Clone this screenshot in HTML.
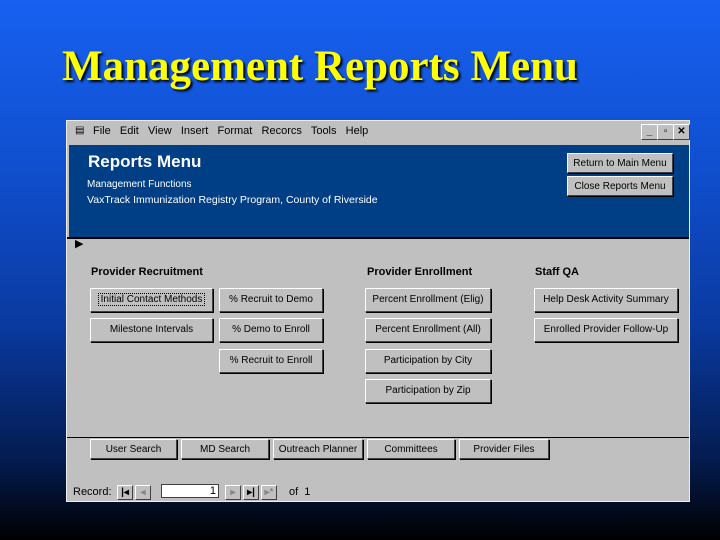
<!DOCTYPE html><html><head><style>
body{margin:0;width:720px;height:540px;overflow:hidden;background:linear-gradient(#1760f0 0%,#1050d0 30%,#0a3aa0 60%,#041c50 85%,#000 100%);font-family:"Liberation Sans",sans-serif;position:relative}
.t{position:absolute;left:62px;top:42px;font:bold 43px "Liberation Serif",serif;color:#ff0;text-shadow:2px 2px 2px #000;white-space:nowrap}
.w{position:absolute;left:66px;top:120px;width:624px;height:382px;background:#c0c0c0;border:1px solid #eee;box-sizing:border-box}
.m{position:absolute;top:4px;font-size:11px;color:#000}
.hd{position:absolute;left:2px;top:24px;width:620px;height:92px;background:#003f86;color:#fff}
.b{position:absolute;height:22px;background:#c0c0c0;border:1px solid;border-color:#fff #404040 #404040 #fff;box-shadow:1px 1px 0 #000;font-size:10px;text-align:center;line-height:22px;box-sizing:border-box;color:#000;white-space:nowrap}
.l{position:absolute;font-size:11px;font-weight:bold;color:#000}
.x{position:absolute;top:3px;width:15px;height:14px;background:#c0c0c0;border:1px solid;border-color:#fff #404040 #404040 #fff;font-size:10px;line-height:13px;text-align:center;font-weight:bold}
</style></head><body>
<div class="t">Management Reports Menu</div>
<div class="w">
<div class="m" style="left:8px;font-size:10px">▤</div>
<div class="m" style="left:26px">File &nbsp; Edit &nbsp; View &nbsp; Insert &nbsp; Format &nbsp; Recorcs &nbsp; Tools &nbsp; Help</div>
<div class="x" style="left:574px">_</div><div class="x" style="left:590px">▫</div><div class="x" style="left:606px">✕</div>
<div class="hd">
<div style="position:absolute;left:19px;top:7px;font-size:17px;font-weight:bold">Reports Menu</div>
<div style="position:absolute;left:18px;top:34px;font-size:10px">Management Functions</div>
<div style="position:absolute;left:18px;top:49px;font-size:10.5px">VaxTrack Immunization Registry Program, County of Riverside</div>
<div class="b" style="left:498px;top:8px;width:106px;height:20px;line-height:20px">Return to Main Menu</div>
<div class="b" style="left:498px;top:31px;width:106px;height:20px;line-height:20px">Close Reports Menu</div>
</div>
<div style="position:absolute;left:0;top:116px;width:622px;height:2px;background:#000"></div>
<div style="position:absolute;left:8px;top:116px;font-size:11px">▶</div>
<div class="l" style="left:24px;top:145px">Provider Recruitment</div>
<div class="l" style="left:300px;top:145px">Provider Enrollment</div>
<div class="l" style="left:468px;top:145px">Staff QA</div>
<div class="b" style="left:23px;top:167px;width:123px;height:24px"><span style="border:1px dotted #000;padding:0 2px">Initial Contact Methods</span></div>
<div class="b" style="left:152px;top:167px;width:104px;height:24px">% Recruit to Demo</div>
<div class="b" style="left:298px;top:167px;width:126px;height:24px">Percent Enrollment (Elig)</div>
<div class="b" style="left:467px;top:167px;width:144px;height:24px">Help Desk Activity Summary</div>
<div class="b" style="left:23px;top:197px;width:123px;height:24px">Milestone Intervals</div>
<div class="b" style="left:152px;top:197px;width:104px;height:24px">% Demo to Enroll</div>
<div class="b" style="left:298px;top:197px;width:126px;height:24px">Percent Enrollment (All)</div>
<div class="b" style="left:467px;top:197px;width:144px;height:24px">Enrolled Provider Follow-Up</div>
<div class="b" style="left:152px;top:228px;width:104px;height:24px">% Recruit to Enroll</div>
<div class="b" style="left:298px;top:228px;width:126px;height:24px">Participation by City</div>
<div class="b" style="left:298px;top:258px;width:126px;height:24px">Participation by Zip</div>
<div style="position:absolute;left:0;top:316px;width:622px;height:1px;background:#000"></div>
<div class="b" style="left:23px;top:318px;width:87px;height:20px;line-height:20px">User Search</div>
<div class="b" style="left:114px;top:318px;width:88px;height:20px;line-height:20px">MD Search</div>
<div class="b" style="left:206px;top:318px;width:90px;height:20px;line-height:20px">Outreach Planner</div>
<div class="b" style="left:300px;top:318px;width:88px;height:20px;line-height:20px">Committees</div>
<div class="b" style="left:392px;top:318px;width:90px;height:20px;line-height:20px">Provider Files</div>
<div style="position:absolute;left:6px;top:365px;font-size:11px">Record:</div>
<div class="x" style="left:50px;top:364px;width:14px;height:13px">|◂</div>
<div class="x" style="left:68px;top:364px;width:14px;height:13px;color:#888">◂</div>
<div style="position:absolute;left:94px;top:363px;width:58px;height:14px;background:#fff;border:1px solid #404040;font-size:11px;text-align:right;padding-right:2px;box-sizing:border-box">1</div>
<div class="x" style="left:158px;top:364px;width:14px;height:13px;color:#888">▸</div>
<div class="x" style="left:176px;top:364px;width:14px;height:13px">▸|</div>
<div class="x" style="left:194px;top:364px;width:14px;height:13px;color:#888">▸*</div>
<div style="position:absolute;left:222px;top:365px;font-size:11px">of &nbsp;1</div>
</div>
</body></html>
